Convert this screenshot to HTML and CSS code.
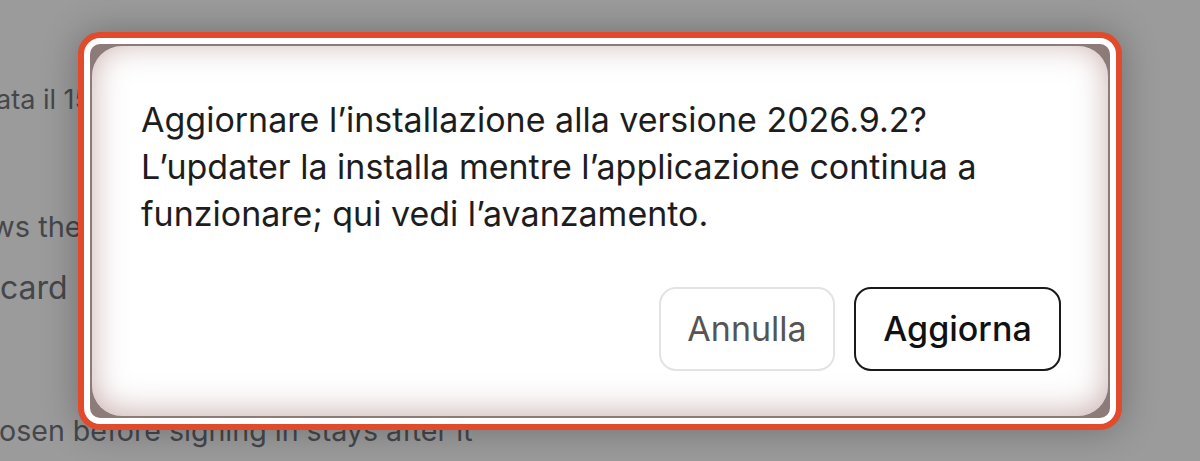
FILE: index.html
```html
<!DOCTYPE html>
<html lang="it">
<head>
<meta charset="utf-8">
<title>Aggiornamento</title>
<link rel="stylesheet" href="styles.css">
</head>
<body>
<main class="page">
  <p class="bg-line l1">ata il 15 settembre 2026 alle 09:41</p>
  <p class="bg-line l2">ws the current version and the update card</p>
  <p class="bg-line l3">card shows progress while the updater runs</p>
  <p class="bg-line l4">osen before signing in stays after it</p>
</main>
<div class="overlay">
  <div class="dialog" role="dialog" aria-modal="true">
    <div class="frame">
      <div class="card">
        <p class="message">Aggiornare l’installazione alla versione 2026.9.2?<br>L’updater la installa mentre l’applicazione continua a funzionare; qui vedi l’avanzamento.</p>
        <div class="actions">
          <button class="btn btn-cancel" type="button">Annulla</button>
          <button class="btn btn-confirm" type="button">Aggiorna</button>
        </div>
      </div>
    </div>
  </div>
</div>
</body>
</html>
```

FILE: styles.css
```css
html, body {
  margin: 0;
  padding: 0;
  height: 100%;
}
body {
  background: #9b9b9b;
  font-family: Inter, "Noto Sans", "Liberation Sans", sans-serif;
  overflow: hidden;
}
.page {
  display: flex;
  flex-direction: column;
  padding-top: 80px;
}
.bg-line {
  margin: 0;
  font-size: 29px;
  line-height: 40px;
  color: #45474b;
  white-space: nowrap;
}
.l1 { margin-left: -4px; font-size: 27px; }
.l2 { margin-top: 87px; margin-left: -9px; }
.l3 { margin-top: 21px; margin-left: 0; font-size: 32px; }
.l4 { margin-top: 103px; margin-left: -1px; font-size: 28.6px; }

.overlay {
  position: fixed;
  inset: 0;
  display: flex;
  align-items: center;
  justify-content: center;
}
.dialog {
  box-sizing: border-box;
  width: 1044px;
  border: 6px solid #e14a2b;
  border-radius: 22px;
  background: #ffffff;
  padding: 6px;
  box-shadow: 0 0 36px rgba(0, 0, 0, 0.28);
}
.frame {
  background: #8c7b78;
  border-radius: 10px;
  padding: 2px;
}
.card {
  background: #ffffff;
  border-radius: 30px;
  padding: 50px 47px 45px 49px;
  box-shadow: inset 0 -3px 32px rgba(150, 100, 95, 0.5);
  display: flex;
  flex-direction: column;
  gap: 50px;
}
.message {
  margin: 0;
  font-size: 34px;
  line-height: 47px;
  color: #1d1d1d;
}
.actions {
  display: flex;
  justify-content: flex-end;
  gap: 19px;
}
.btn {
  box-sizing: border-box;
  height: 84px;
  padding: 0 26px;
  border-radius: 17px;
  font-family: inherit;
  font-size: 34px;
  background: #ffffff;
  cursor: pointer;
}
.btn-cancel {
  border: 2px solid #e3e3e3;
  color: #555555;
  min-width: 176px;
}
.btn-confirm {
  border: 2px solid #1a1a1a;
  color: #111111;
  font-weight: 500;
  min-width: 207px;
}
```
